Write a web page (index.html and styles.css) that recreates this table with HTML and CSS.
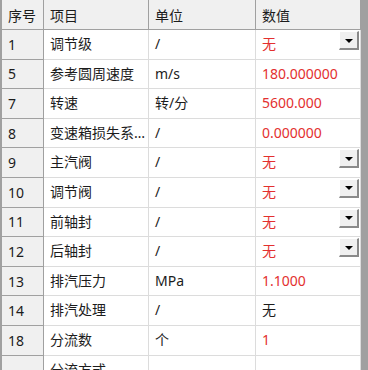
FILE: index.html
```html
<!DOCTYPE html>
<html lang="zh">
<head>
<meta charset="utf-8">
<link rel="stylesheet" href="styles.css">
</head>
<body>
<div class="frame">
  <div class="grid">
    <div class="hd">序号</div><div class="hd">项目</div><div class="hd">单位</div><div class="hd">数值</div>

    <div class="rh">1</div><div class="c">调节级</div><div class="c">/</div><div class="c red dd">无<span class="btn"><span class="tri"></span></span></div>
    <div class="rh">5</div><div class="c">参考圆周速度</div><div class="c">m/s</div><div class="c red">180.000000</div>
    <div class="rh">7</div><div class="c">转速</div><div class="c">转/分</div><div class="c red">5600.000</div>
    <div class="rh">8</div><div class="c">变速箱损失系数</div><div class="c">/</div><div class="c red">0.000000</div>
    <div class="rh">9</div><div class="c">主汽阀</div><div class="c">/</div><div class="c red dd">无<span class="btn"><span class="tri"></span></span></div>
    <div class="rh">10</div><div class="c">调节阀</div><div class="c">/</div><div class="c red dd">无<span class="btn"><span class="tri"></span></span></div>
    <div class="rh">11</div><div class="c">前轴封</div><div class="c">/</div><div class="c red dd">无<span class="btn"><span class="tri"></span></span></div>
    <div class="rh">12</div><div class="c">后轴封</div><div class="c">/</div><div class="c red dd">无<span class="btn"><span class="tri"></span></span></div>
    <div class="rh">13</div><div class="c">排汽压力</div><div class="c">MPa</div><div class="c red">1.1000</div>
    <div class="rh">14</div><div class="c">排汽处理</div><div class="c">/</div><div class="c">无</div>
    <div class="rh">18</div><div class="c">分流数</div><div class="c">个</div><div class="c red">1</div>
    <div class="rh"></div><div class="c">分流方式</div><div class="c"></div><div class="c"></div>
  </div>
</div>
</body>
</html>
```
FILE: styles.css
```css
html, body {
  margin: 0;
  padding: 0;
  height: 370px;
  overflow: hidden;
  background: #a0a0a0;
}
.frame {
  padding-left: 2px;
  height: 370px;
  overflow: hidden;
}
.grid {
  display: grid;
  grid-template-columns: 42px 105px 107px 105px;
  grid-template-rows: 30px;
  grid-auto-rows: 29.6px;
  width: 359px;
  background: #ffffff;
  font-family: "Noto Sans", "Noto Sans CJK SC", sans-serif;
  font-size: 14px;
  color: #1c1c1c;
}
.grid > div {
  box-sizing: border-box;
  display: flex;
  align-items: center;
  padding-left: 6px;
  padding-right: 1px;
  white-space: nowrap;
  overflow: hidden;
  min-width: 0;
}
.hd {
  background: #f0f0f0;
  border-right: 1px solid #a0a0a0;
  border-bottom: 1px solid #a0a0a0;
  padding-top: 0;
}
.rh {
  background: #f0f0f0;
  border-right: 1px solid #a0a0a0;
  border-bottom: 1px solid #a0a0a0;
}
.c {
  border-right: 1px solid #dcdcdc;
  border-bottom: 1px solid #dcdcdc;
}
.grid > .c {
  display: block;
  line-height: 28.6px;
  text-overflow: ellipsis;
}
.red {
  color: #e3302f;
}
.dd {
  position: relative;
}
.btn {
  position: absolute;
  top: 1px;
  right: 1px;
  width: 20px;
  height: 19px;
  box-sizing: border-box;
  background: #f0f0f0;
  border-top: 1px solid #ffffff;
  border-left: 1px solid #ffffff;
  border-right: 2px solid #8a8a8a;
  border-bottom: 2px solid #8a8a8a;
  display: flex;
  align-items: center;
  justify-content: center;
}
.tri {
  width: 0;
  height: 0;
  border-left: 4px solid transparent;
  border-right: 4px solid transparent;
  border-top: 4px solid #000000;
  margin-top: 1px;
}
```
